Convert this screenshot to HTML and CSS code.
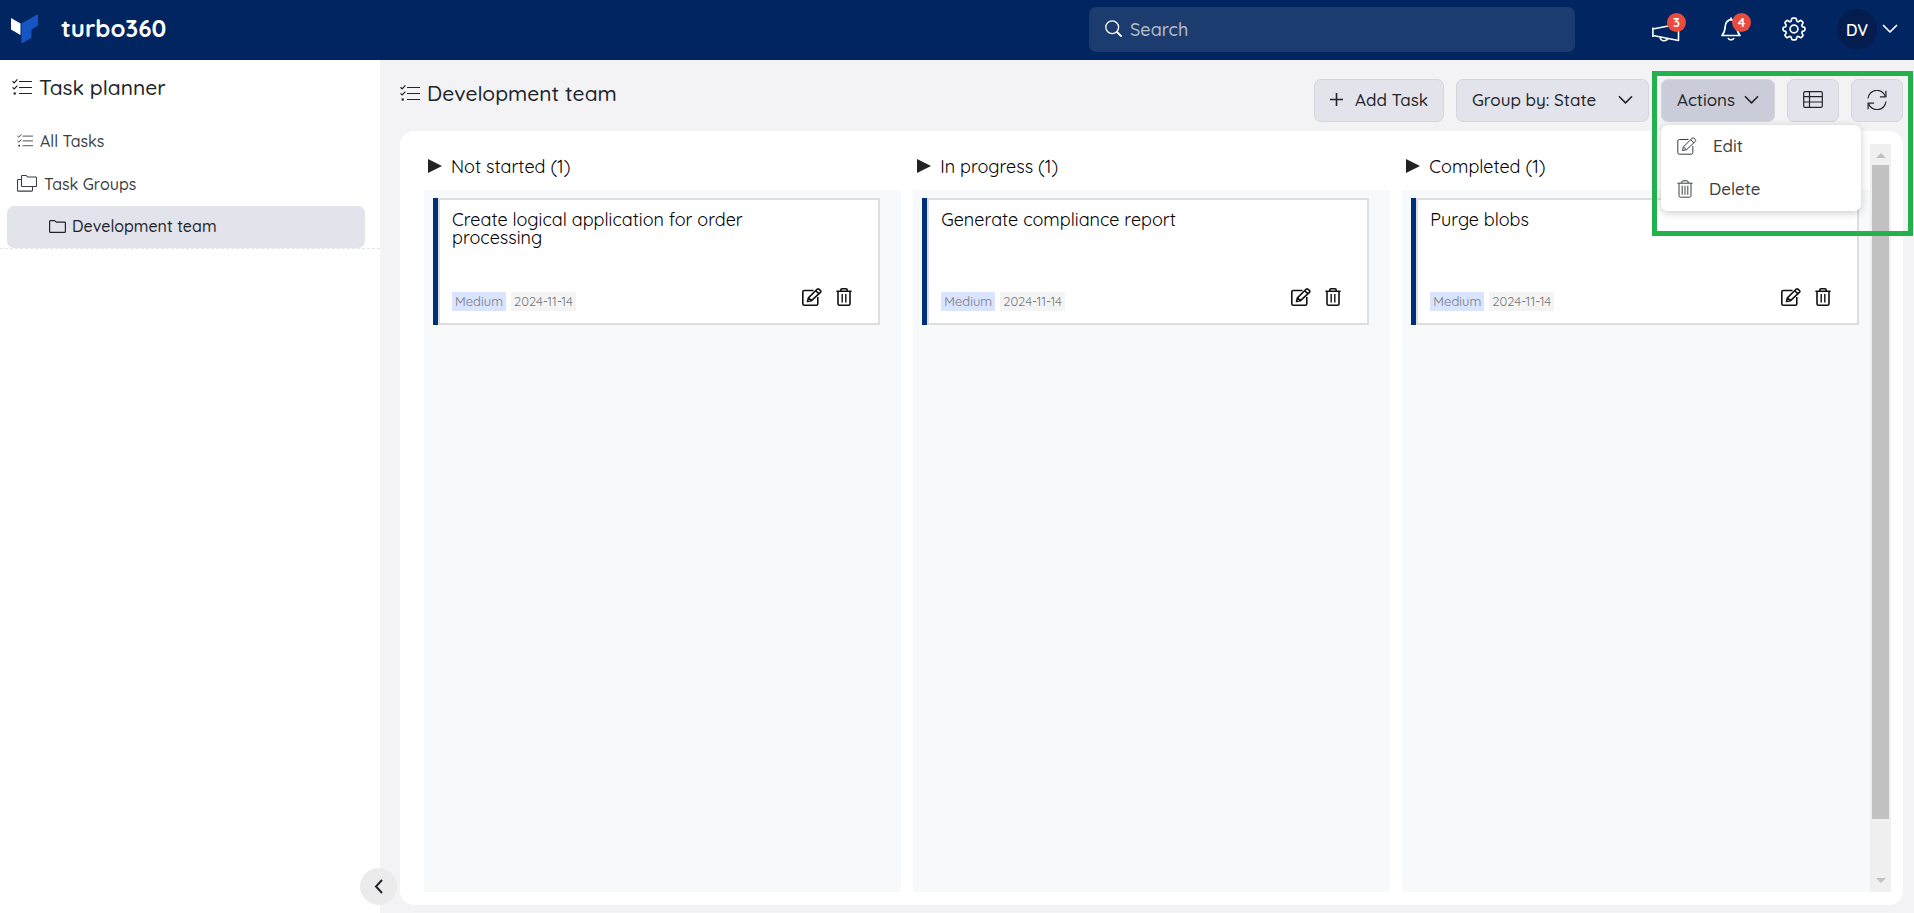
FILE: index.html
```html
<!DOCTYPE html>
<html lang="en">
<head>
<meta charset="utf-8">
<title>Task planner - turbo360</title>
<link rel="stylesheet" href="styles.css">
</head>
<body>
<svg class="sprite" aria-hidden="true">
  <symbol id="i-checks" viewBox="0 0 20 16"><g fill="none" stroke="currentColor"><path stroke-width="1.1" d="M7 2.500h13M7 8.500h13M7 14.500h13"/><path stroke-width="1.2" d="M.5 2.200 2.200 3.800 5.400.4M.5 8.400l1.700 1.600 3.200-3.400"/></g><rect x="1.600" y="13.400" width="2.200" height="2.200" fill="currentColor"/></symbol>
  <symbol id="i-folders" viewBox="0 0 20 17"><path fill="none" stroke="currentColor" stroke-width="1.1" d="M4.500 1.200q0-.7.7-.7h3.600q.5 0 .9.5l.9 1h8.200q.7 0 .7.7v8q0 .8-.7.8H5.200q-.7 0-.7-.8zM4.500 4.500H1.300q-.8 0-.8.8v10q0 .8.800.8h13.400q.8 0 .8-.8v-3.600"/></symbol>
  <symbol id="i-folder" viewBox="0 0 17 13"><path fill="none" stroke="currentColor" stroke-width="1.200" d="M.6 1.400q0-.8.800-.8h4q.5 0 .9.500l1 1h8.200q.9 0 .9.800v8.600q0 .9-.9.900H1.500q-.9 0-.9-.9z"/></symbol>
  <symbol id="i-search" viewBox="0 0 17 17"><g fill="none" stroke="currentColor" stroke-width="1.300" stroke-linecap="round"><circle cx="7.200" cy="7.200" r="6.400"/><path stroke-width="1.800" d="m12 12 4 4"/></g></symbol>
  <symbol id="i-chevron" viewBox="0 0 16 10"><path fill="none" stroke="currentColor" stroke-width="1.700" stroke-linecap="round" stroke-linejoin="round" d="m1.500 1.500 6.500 6.500 6.500-6.500"/></symbol>
  <symbol id="i-left" viewBox="0 0 9 15"><path fill="none" stroke="currentColor" stroke-width="2" d="M8 1 2 7.500 8 14"/></symbol>
  <symbol id="i-pencil" viewBox="0 0 20 18"><g fill="none" stroke="currentColor" stroke-linejoin="round"><path d="M11.500 2.500H2.300Q.8 2.500.8 4v11.700q0 1.500 1.500 1.500h12q1.500 0 1.500-1.500V9"/><path d="m5.500 13.500.9-3.600 8.700-8.600q.9-.9 2 0l1.200 1.100q1 1 .1 2L9.500 12.700zM13.800 2.800l3.200 3.100M6.400 9.900l3.100 2.800"/></g></symbol>
  <symbol id="i-trash" viewBox="0 0 16 18"><g fill="none" stroke="currentColor"><path d="M.4 3.200h15.200M4.800 3V2q0-1.200 1.300-1.200h3.800q1.300 0 1.300 1.200v1M2 3.300v12.400q0 1.500 1.500 1.500h9q1.500 0 1.500-1.500V3.300"/><path stroke-width="1.400" d="M6.200 6v8.500M9.800 6v8.500"/></g></symbol>
  <symbol id="i-trash3" viewBox="0 0 16 18"><g fill="none" stroke="currentColor"><path d="M.4 3.200h15.200M4.800 3V2q0-1.200 1.300-1.200h3.800q1.300 0 1.300 1.200v1M2 3.300v12.400q0 1.500 1.500 1.500h9q1.500 0 1.500-1.500V3.300"/><path d="M5.200 5.800v9M8 5.800v9M10.800 5.800v9"/></g></symbol>
  <symbol id="i-table" viewBox="0 0 20 17"><g fill="none" stroke="currentColor" stroke-width="1.200"><rect x=".7" y=".7" width="18.600" height="15.600" rx="1.300"/><path d="M.7 5.700h18.600M.7 11h18.600M6.500.7v15.600"/></g></symbol>
  <symbol id="i-refresh" viewBox="0 0 20 20"><g fill="none" stroke="currentColor" stroke-width="1.200"><path d="M1 8.500a9 9 0 0 1 17.500-2M19 11.500a9 9 0 0 1-17.500 2"/><path d="M18.900.8v6h-6M1.100 19.200v-6h6"/></g></symbol>
  <symbol id="i-horn" viewBox="0 0 28 19"><g fill="none" stroke="currentColor" stroke-width="1.600" stroke-linejoin="round"><path d="M.9 4.500V14M.9 6 26.500 1v16.500L.9 12.500M8 14q.5 3.800 4 3.800 3 0 3.800-2.200"/></g></symbol>
  <symbol id="i-bell" viewBox="0 0 20 24"><g fill="none" stroke="currentColor" stroke-width="1.700" stroke-linejoin="round"><path d="M10 2.600Q4.500 3.500 4.200 9.500 4 15 1 18.500h18q-3-3.500-3.200-9Q15.500 3.500 10 2.600z"/><path d="M10 .5v2M7 21q.8 1.900 3 1.900t3-1.900"/></g></symbol>
  <symbol id="i-gear" viewBox="0 0 24 24"><g fill="none" stroke="currentColor" stroke-width="1.700" stroke-linejoin="round"><circle cx="12" cy="12" r="3.900"/><path d="M9.600 2.200q.2-1 1.200-1h2.400q1 0 1.200 1l.3 1.500q.2.800 1 .9.800.2 1.400-.3l.8-.6q.9-.6 1.600.1l1.100 1.100q.8.800.2 1.700l-.8 1.100q-.4.600-.1 1.300.3.800 1 1l1.100.2q.9.200.9 1.200v1.300q0 1-.9 1.200l-1.100.2q-.7.200-1 1-.3.700.1 1.300l.8 1.100q.6.900-.2 1.700l-1.100 1.100q-.7.700-1.600.1l-.8-.6q-.6-.5-1.400-.3-.8.200-1 .9l-.3 1.500q-.2 1-1.200 1h-2.400q-1 0-1.200-1l-.3-1.500q-.2-.7-1-.9-.8-.2-1.400.3l-.8.600q-.9.600-1.600-.1l-1.100-1.100q-.8-.8-.2-1.700l.8-1.100q.4-.6.100-1.300-.3-.8-1-1l-1.100-.2q-.9-.2-.9-1.200v-1.300q0-1 .9-1.200l1.100-.2q.7-.2 1-1 .3-.7-.1-1.300l-.8-1.100q-.6-.9.200-1.700l1.100-1.100q.7-.7 1.600-.1l.8.600q.6.500 1.400.3.800-.1 1-.9z"/></g></symbol>
</svg>

<header class="topbar">
  <a class="brand" href="#">
    <svg class="brand-mark" viewBox="0 0 27 30" aria-hidden="true"><path fill="#fff" d="M0 4 9.500 9.500V21L0 15.500z"/><path fill="#1555c4" d="M10.500 9.500 27 0v11.500l-6.500 4v8.500l-10 5.500z"/></svg>
    <span class="brand-name">turbo360</span>
  </a>
  <label class="search"><svg class="ic-search"><use href="#i-search"/></svg><input type="search" placeholder="Search" aria-label="Search"></label>
  <nav class="top-actions" aria-label="Account">
    <button class="icon-btn" aria-label="Announcements"><svg class="ic-horn"><use href="#i-horn"/></svg><span class="badge">3</span></button>
    <button class="icon-btn" aria-label="Notifications"><svg class="ic-bell"><use href="#i-bell"/></svg><span class="badge">4</span></button>
    <button class="icon-btn" aria-label="Settings"><svg class="ic-gear"><use href="#i-gear"/></svg></button>
    <button class="profile"><span class="avatar">DV</span><svg class="ic-chevron"><use href="#i-chevron"/></svg></button>
  </nav>
</header>

<div class="shell">
  <aside class="sidebar">
    <h1 class="heading side-title"><svg class="ic-checks"><use href="#i-checks"/></svg>Task planner</h1>
    <nav class="side-nav" aria-label="Tasks">
      <a class="side-link" href="#"><svg class="ic-checks-sm"><use href="#i-checks"/></svg>All Tasks</a>
      <a class="side-link" href="#"><svg class="ic-folders"><use href="#i-folders"/></svg>Task Groups</a>
      <div class="side-group"><a class="side-link selected" href="#"><svg class="ic-folder"><use href="#i-folder"/></svg>Development team</a></div>
    </nav>
    <button class="collapse" aria-label="Collapse sidebar"><svg class="ic-left"><use href="#i-left"/></svg></button>
  </aside>

  <main class="main">
    <div class="toolbar">
      <h2 class="heading main-title"><svg class="ic-checks"><use href="#i-checks"/></svg>Development team</h2>
      <button class="btn btn-add"><svg class="ic-plus" viewBox="0 0 13 13"><path stroke="currentColor" stroke-width="1.600" d="M6.500 0v13M0 6.500h13"/></svg>Add Task</button>
      <button class="btn btn-group">Group by: State<svg class="ic-chevron-sm"><use href="#i-chevron"/></svg></button>
      <div class="menu-anchor">
        <button class="btn btn-actions" aria-expanded="true">Actions<svg class="ic-chevron-sm"><use href="#i-chevron"/></svg></button>
        <div class="menu">
          <button class="menu-item"><svg class="ic-pencil"><use href="#i-pencil"/></svg>Edit</button>
          <button class="menu-item"><svg class="ic-trash"><use href="#i-trash3"/></svg>Delete</button>
        </div>
      </div>
      <button class="btn btn-icon" aria-label="Table view"><svg class="ic-table"><use href="#i-table"/></svg></button>
      <button class="btn btn-icon" aria-label="Refresh"><svg class="ic-refresh"><use href="#i-refresh"/></svg></button>
      <div class="highlight"></div>
    </div>

    <div class="panel">
      <div class="board">
        <section class="column">
          <h3 class="column-title"><span class="marker"></span>Not started (1)</h3>
          <div class="column-body">
            <article class="card">
              <p class="card-title">Create logical application for order processing</p>
              <div class="card-foot"><span class="tag tag-medium">Medium</span><span class="tag">2024-11-14</span>
                <button class="card-btn" aria-label="Edit task"><svg class="ic-pencil"><use href="#i-pencil"/></svg></button>
                <button class="card-btn" aria-label="Delete task"><svg class="ic-trash"><use href="#i-trash"/></svg></button></div>
            </article>
          </div>
        </section>
        <section class="column">
          <h3 class="column-title"><span class="marker"></span>In progress (1)</h3>
          <div class="column-body">
            <article class="card">
              <p class="card-title">Generate compliance report</p>
              <div class="card-foot"><span class="tag tag-medium">Medium</span><span class="tag">2024-11-14</span>
                <button class="card-btn" aria-label="Edit task"><svg class="ic-pencil"><use href="#i-pencil"/></svg></button>
                <button class="card-btn" aria-label="Delete task"><svg class="ic-trash"><use href="#i-trash"/></svg></button></div>
            </article>
          </div>
        </section>
        <section class="column">
          <h3 class="column-title"><span class="marker"></span>Completed (1)</h3>
          <div class="column-body">
            <article class="card">
              <p class="card-title">Purge blobs</p>
              <div class="card-foot"><span class="tag tag-medium">Medium</span><span class="tag">2024-11-14</span>
                <button class="card-btn" aria-label="Edit task"><svg class="ic-pencil"><use href="#i-pencil"/></svg></button>
                <button class="card-btn" aria-label="Delete task"><svg class="ic-trash"><use href="#i-trash"/></svg></button></div>
            </article>
          </div>
        </section>
      </div>
      <div class="scrollbar" aria-hidden="true">
        <span class="arrow arrow-up"></span>
        <div class="track"><div class="thumb"></div></div>
        <span class="arrow arrow-down"></span>
      </div>
    </div>
  </main>
</div>
</body>
</html>
```
FILE: styles.css
```css
* { box-sizing: border-box; }
html, body { height: 100%; }
body {
  margin: 0;
  display: flex;
  flex-direction: column;
  overflow: hidden;
  background: #f3f3f5;
  color: #212529;
  font-family: Quicksand, Inter, "Open Sans", sans-serif;
  font-size: 16px;
  font-weight: 500;
}
button, input { font: inherit; color: inherit; }
button { border: 0; background: none; padding: 0; cursor: pointer; }
a { color: inherit; text-decoration: none; }
h1, h2, h3, p { margin: 0; font-weight: 500; }
svg { display: block; flex: none; }
.sprite { position: absolute; width: 0; height: 0; }

.ic-checks { width: 20px; height: 16px; }
.ic-checks-sm { width: 16px; height: 13px; }
.ic-folders { width: 20px; height: 17px; }
.ic-folder { width: 17px; height: 13px; }
.ic-search { width: 17px; height: 17px; }
.ic-chevron { width: 16px; height: 10px; }
.ic-chevron-sm { width: 15px; height: 10px; }
.ic-left { width: 9px; height: 15px; }
.ic-plus { width: 13px; height: 13px; }
.ic-pencil { width: 20px; height: 18px; }
.ic-trash { width: 16px; height: 18px; }
.ic-table { width: 20px; height: 17px; }
.ic-refresh { width: 20px; height: 20px; }
.ic-horn { width: 28px; height: 19px; }
.ic-bell { width: 20px; height: 24px; }
.ic-gear { width: 24px; height: 24px; }

.topbar {
  flex: none;
  height: 60px;
  display: flex;
  align-items: center;
  padding: 0 16px 2px 11px;
  background: #002560;
  color: #fff;
}
.brand { display: flex; align-items: center; gap: 23px; font-size: 24px; font-weight: 700; }
.brand-mark { width: 27px; height: 30px; }
.brand-name { padding-bottom: 2px; }
.search {
  display: flex;
  align-items: center;
  gap: 8px;
  width: 486px;
  height: 45px;
  margin: 0 77px 0 auto;
  padding: 0 16px 2px;
  border-radius: 7px;
  background: #1c3c70;
}
.search input { flex: 1; min-width: 0; border: 0; padding: 2px 0 0; background: none; outline: 0; font-size: 18px; }
.search input::placeholder { color: #b9bfc8; opacity: 1; }
.top-actions { display: flex; align-items: center; gap: 41px; }
.icon-btn { position: relative; left: 0; }
.badge {
  position: absolute;
  top: -9px;
  right: -6px;
  width: 19px;
  height: 19px;
  border-radius: 50%;
  background: #e94b3c;
  font-size: 13px;
  font-weight: 700;
  line-height: 19px;
}
.ic-horn { margin-top: 6px; }
.ic-horn + .badge { top: -4px; }
.ic-bell + .badge { top: -4px; right: -10px; }
.profile { display: flex; align-items: center; gap: 5px; margin-left: -10px; }
.avatar { width: 40px; height: 40px; border-radius: 50%; background: #041d4e; line-height: 42px; font-weight: 600; }

.shell { flex: 1; min-height: 0; display: flex; }
.sidebar { position: relative; flex: none; width: 380px; background: #fff; }
.heading { display: flex; align-items: center; gap: 7px; font-size: 21px; line-height: 26px; }
.side-title { padding: 14px 12px 0; }
.side-nav { display: flex; flex-direction: column; padding-top: 19px; }
.side-link { display: flex; align-items: center; gap: 7px; height: 43px; padding-left: 17px; color: #3b3f43; }
.side-group { padding: 1px 15px 0 7px; border-bottom: 1px dashed #e3e3e8; }
.selected { height: 42px; padding: 0 0 2px 42px; gap: 6px; border-radius: 7px; background: #e3e3ec; color: #212529; }
.collapse {
  position: absolute;
  right: -17px;
  bottom: 8px;
  display: grid;
  place-items: center;
  width: 37px;
  height: 37px;
  border-radius: 50%;
  background: #ebebeb;
}

.main { flex: 1; min-width: 0; display: flex; flex-direction: column; padding: 0 11px 8px 20px; }
.toolbar { position: relative; display: flex; align-items: center; gap: 12px; padding: 19px 0 9px; }
.main-title { flex: 1; padding-bottom: 15px; }
.btn {
  display: flex;
  align-items: center;
  justify-content: space-between;
  height: 43px;
  padding: 0 15px 2px;
  border: 1px solid #d5d5da;
  border-radius: 7px;
  background: #e3e3ec;
  font-size: 17px;
}
.btn-add { width: 130px; }
.btn-group { width: 193px; }
.btn-actions { width: 114px; background: #cbccda; }
.btn-icon { width: 52px; padding: 0 0 2px; justify-content: center; }
.menu-anchor { position: relative; }
.menu {
  position: absolute;
  z-index: 2;
  top: 46px;
  left: 0;
  width: 200px;
  border-radius: 7px;
  background: #fff;
  box-shadow: 0 2px 8px rgba(0, 0, 0, .2);
}
.menu-item { display: flex; align-items: center; gap: 16px; width: 100%; height: 43px; padding: 0 16px 2px; color: #3b3f43; font-size: 17px; }
.highlight {
  position: absolute;
  z-index: 3;
  top: 11px;
  right: -10px;
  width: 261px;
  height: 165px;
  border: 5px solid #22b14c;
  pointer-events: none;
}

.panel { flex: 1; min-height: 0; display: flex; padding: 13px 12px 13px 24px; border-radius: 14px; background: #fff; }
.board { flex: 1; min-width: 0; display: flex; gap: 12px; overflow: hidden; }
.column { flex: 0 0 33%; display: flex; flex-direction: column; }
.column-title { display: flex; align-items: center; gap: 9px; height: 46px; padding: 0 0 2px 4px; font-size: 18px; font-weight: 400; color: #000; }
.marker { border: 7px solid transparent; border-left: 14px solid #222; border-right: 0; }
.column-body { flex: 1; padding: 8px 21px 0 14px; background: #f8f9fb; }
.card {
  display: flex;
  flex-direction: column;
  justify-content: space-between;
  height: 127px;
  padding: 11px 24px 12px 12px;
  border: 2px solid #dedede;
  background: #fff;
  box-shadow: -5px 0 0 #003077;
}
.card-title { max-width: 330px; font-size: 18px; font-weight: 400; line-height: 18px; color: #000; }
.card-foot { display: flex; align-items: flex-end; gap: 5px; }
.tag { padding: 0 3px; background: #f4f4f5; color: #75797d; font-size: 13px; font-weight: 400; line-height: 19px; }
.tag-medium { background: #dae4ff; }
.card-btn { margin: 0 2px 5px 7px; color: #111; stroke-width: 1.6px; }
.tag + .card-btn { margin-left: auto; }

.scrollbar { width: 21px; display: flex; flex-direction: column; align-items: center; background: #f0f0f0; }
.arrow { border: 5px solid transparent; height: 9px; }
.arrow-up { border-top-width: 4px; border-bottom: 5px solid #c1c1c1; margin: 5px 0 7px; }
.arrow-down { border-bottom-width: 4px; border-top: 5px solid #c1c1c1; margin: 7px 0 5px; }
.track { flex: 1; align-self: stretch; padding: 0 2px; }
.thumb { height: 92.7%; background: #c1c1c1; }
```
